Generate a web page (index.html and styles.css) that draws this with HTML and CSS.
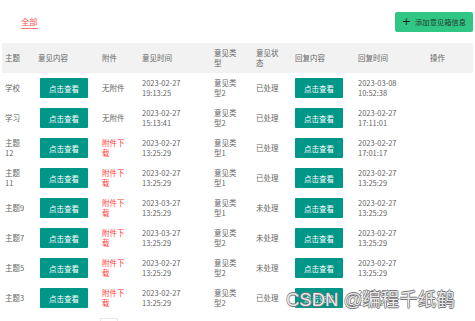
FILE: index.html
```html
<!DOCTYPE html>
<html lang="zh">
<head>
<meta charset="utf-8">
<title>意见箱</title>
<link rel="stylesheet" href="styles.css">
</head>
<body>
<div class="page">
  <div class="toolbar">
    <span class="tab">全部</span>
    <button class="add-btn"><span class="plus">+</span>添加意见箱信息</button>
  </div>
  <table class="grid">
    <colgroup>
      <col class="w1"><col class="w2"><col class="w3"><col class="w4"><col class="w5"><col class="w6"><col class="w7"><col class="w8"><col class="w9">
    </colgroup>
    <thead>
      <tr><th>主题</th><th>意见内容</th><th>附件</th><th>意见时间</th><th>意见类型</th><th>意见状态</th><th>回复内容</th><th>回复时间</th><th>操作</th></tr>
    </thead>
    <tbody>
      <tr><td>学校</td><td><button class="view">点击查看</button></td><td>无附件</td><td>2023-02-27 19:13:25</td><td>意见类型2</td><td>已处理</td><td><button class="view">点击查看</button></td><td>2023-03-08 10:52:38</td><td></td></tr>
      <tr><td>学习</td><td><button class="view">点击查看</button></td><td>无附件</td><td>2023-02-27 15:13:41</td><td>意见类型2</td><td>已处理</td><td><button class="view">点击查看</button></td><td>2023-02-27 17:11:01</td><td></td></tr>
      <tr><td>主题12</td><td><button class="view">点击查看</button></td><td class="link">附件下载</td><td>2023-02-27 13:25:29</td><td>意见类型1</td><td>已处理</td><td><button class="view">点击查看</button></td><td>2023-02-27 17:01:17</td><td></td></tr>
      <tr><td>主题11</td><td><button class="view">点击查看</button></td><td class="link">附件下载</td><td>2023-02-27 13:25:29</td><td>意见类型1</td><td>已处理</td><td><button class="view">点击查看</button></td><td>2023-02-27 13:25:29</td><td></td></tr>
      <tr><td>主题9</td><td><button class="view">点击查看</button></td><td class="link">附件下载</td><td>2023-03-27 13:25:29</td><td>意见类型1</td><td>未处理</td><td><button class="view">点击查看</button></td><td>2023-02-27 13:25:29</td><td></td></tr>
      <tr><td>主题7</td><td><button class="view">点击查看</button></td><td class="link">附件下载</td><td>2023-03-27 13:25:29</td><td>意见类型2</td><td>未处理</td><td><button class="view">点击查看</button></td><td>2023-02-27 13:25:29</td><td></td></tr>
      <tr><td>主题5</td><td><button class="view">点击查看</button></td><td class="link">附件下载</td><td>2023-02-27 13:25:29</td><td>意见类型2</td><td>未处理</td><td><button class="view">点击查看</button></td><td>2023-02-27 13:25:29</td><td></td></tr>
      <tr><td>主题3</td><td><button class="view">点击查看</button></td><td class="link">附件下载</td><td>2023-02-27 13:25:29</td><td>意见类型2</td><td>已处理</td><td><button class="view">点击查看</button></td><td>2023-02-27 13:25:29</td><td></td></tr>
    </tbody>
  </table>
  <div class="pager"><span class="pg"></span></div>
  <div class="watermark">CSDN @编程千纸鹤</div>
</div>
</body>
</html>
```

FILE: styles.css
```css
html, body {
  margin: 0;
  padding: 0;
  overflow: hidden;
  background: #fff;
}
.page {
  position: relative;
  width: 475px;
  height: 321px;
  overflow: hidden;
  font-family: "Noto Sans CJK SC", "Liberation Sans", sans-serif;
  font-size: 7.5px;
  color: #666;
}
.toolbar {
  height: 43px;
  display: flex;
  align-items: center;
  justify-content: space-between;
  padding: 0 2px 0 21px;
  box-sizing: border-box;
}
.tab {
  font-size: 8.3px;
  line-height: 11px;
  color: #ff4d4d;
  padding-bottom: 1px;
  border-bottom: 1px solid #ff7a7a;
  margin-top: 2px;
}
.add-btn {
  width: 78px;
  height: 20px;
  border: none;
  border-radius: 2px;
  background: #30c784;
  color: #2a3a33;
  font-family: inherit;
  font-size: 7.3px;
  padding: 0;
  display: flex;
  align-items: center;
  justify-content: center;
  gap: 4px;
}
.plus {
  font-size: 11px;
  line-height: 1;
  color: #222;
  font-family: "DejaVu Sans", sans-serif;
}
.grid {
  margin-left: 2px;
  width: 471px;
  table-layout: fixed;
  border-collapse: collapse;
}
.w1 { width: 33px; }
.w2 { width: 64px; }
.w3 { width: 40px; }
.w4 { width: 72px; }
.w5 { width: 42px; }
.w6 { width: 39px; }
.w7 { width: 63px; }
.w8 { width: 72px; }
.w9 { width: 46px; }
.grid th, .grid td {
  height: 30px;
  padding: 0 0 0 3px;
  text-align: left;
  font-weight: normal;
  line-height: 10.5px;
  vertical-align: middle;
}
.grid thead th {
  background: #f2f2f2;
}
.grid th:nth-child(1), .grid td:nth-child(1) { padding-right: 9px; }
.grid th:nth-child(3), .grid td:nth-child(3) { padding-right: 11px; }
.grid th:nth-child(4), .grid td:nth-child(4) { padding-right: 24px; }
.grid th:nth-child(5), .grid td:nth-child(5) { padding-right: 13px; }
.grid th:nth-child(6), .grid td:nth-child(6) { padding-right: 10px; }
.grid th:nth-child(8), .grid td:nth-child(8) { padding-right: 24px; }
.grid td.link { color: #ff3b3b; }
.view {
  display: block;
  width: 48px;
  height: 20px;
  border: none;
  border-radius: 1px;
  background: #009688;
  color: #fff;
  font-family: inherit;
  font-size: 7.5px;
  padding: 0;
}
.grid td:nth-child(2) .view { margin-left: 2px; }
.pager {
  padding: 5px 0 0 100px;
}
.pg {
  display: block;
  width: 18px;
  height: 20px;
  border: 1px solid #e6e6e6;
  box-sizing: border-box;
}
.watermark {
  position: absolute;
  left: 286px;
  top: 289px;
  font-family: "Liberation Sans", "Noto Sans CJK SC", sans-serif;
  font-size: 18.5px;
  line-height: 22px;
  color: rgba(255, 255, 255, 0.85);
  text-shadow: 0.6px 0 0 #777, -0.6px 0 0 #777, 0 0.6px 0 #777, 0 -0.6px 0 #777;
  white-space: nowrap;
}
```
